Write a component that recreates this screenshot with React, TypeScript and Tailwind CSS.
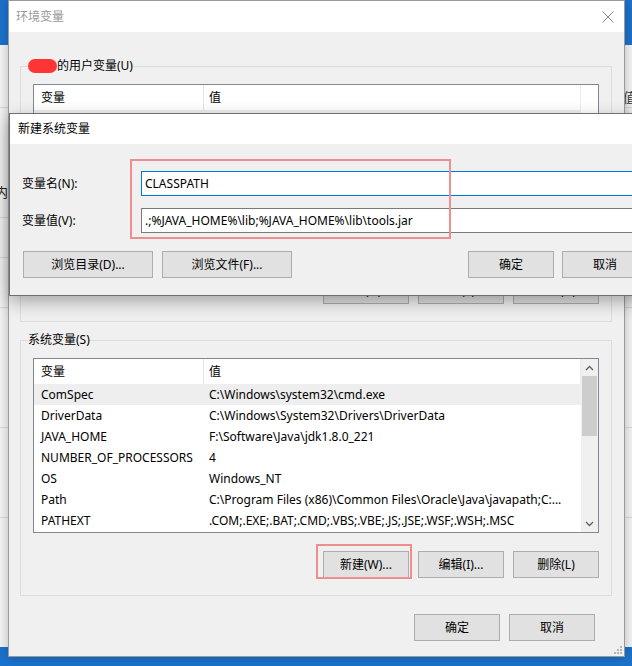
import React from 'react';

type Row = [string, string];

const SYS_ROWS: Row[] = [
  ['ComSpec', 'C:\\Windows\\system32\\cmd.exe'],
  ['DriverData', 'C:\\Windows\\System32\\Drivers\\DriverData'],
  ['JAVA_HOME', 'F:\\Software\\Java\\jdk1.8.0_221'],
  ['NUMBER_OF_PROCESSORS', '4'],
  ['OS', 'Windows_NT'],
  ['Path', 'C:\\Program Files (x86)\\Common Files\\Oracle\\Java\\javapath;C:...'],
  ['PATHEXT', '.COM;.EXE;.BAT;.CMD;.VBS;.VBE;.JS;.JSE;.WSF;.WSH;.MSC'],
];

const USER_ROWS: Row[] = [
  ['OneDrive', 'C:\\Users\\Administrator\\OneDrive'],
  ['Path', 'C:\\Users\\Administrator\\AppData\\Local\\Microsoft\\WindowsApps;'],
  ['TEMP', 'C:\\Users\\Administrator\\AppData\\Local\\Temp'],
  ['TMP', 'C:\\Users\\Administrator\\AppData\\Local\\Temp'],
];

const WinButton: React.FC<{ children: React.ReactNode; className?: string }> = ({ children, className }) => (
  <button
    type="button"
    className={'h-[27px] border border-[#adadad] bg-[#e1e1e1] text-[12px] text-black flex items-center justify-center ' + (className || '')}
  >
    {children}
  </button>
);

const Chevron: React.FC<{ down?: boolean }> = ({ down }) => (
  <svg width="9" height="6" viewBox="0 0 9 6">
    <path d={down ? 'M1 1 L4.5 4.5 L8 1' : 'M1 5 L4.5 1.5 L8 5'} fill="none" stroke="#606060" strokeWidth="1.3" />
  </svg>
);

const VarList: React.FC<{ rows: Row[]; scroll?: boolean }> = ({ rows, scroll }) => (
  <div className="h-[175px] border border-[#828790] bg-white flex overflow-hidden">
    <div className="flex-1 min-w-0 flex flex-col">
      <div className="h-[25px] flex items-center shrink-0 border-r border-[#ececec]">
        <div className="w-[170px] h-full pl-[7px] flex items-center border-r border-[#e5e5e5]">变量</div>
        <div className="pl-[5px]">值</div>
      </div>
      {rows.map(([name, value], i) => (
        <div key={name} className={'h-[21px] shrink-0 flex items-center whitespace-nowrap ' + (i === 0 ? 'bg-[#eeeeee]' : '')}>
          <div className="w-[170px] pl-[7px] overflow-hidden">{name}</div>
          <div className="pl-[5px] flex-1 min-w-0 overflow-hidden">{value}</div>
        </div>
      ))}
    </div>
    {scroll ? (
      <div className="w-[17px] bg-[#f0f0f0] flex flex-col">
        <div className="h-[17px] flex items-center justify-center"><Chevron /></div>
        <div className="mx-[1px] h-[60px] bg-[#cdcdcd]" />
        <div className="flex-1" />
        <div className="h-[17px] flex items-center justify-center"><Chevron down /></div>
      </div>
    ) : (
      <div className="w-[17px] bg-white" />
    )}
  </div>
);

const VarGroup: React.FC<{ legend: React.ReactNode; rows: Row[]; buttons: string[]; scroll?: boolean }> = ({ legend, rows, buttons, scroll }) => (
  <fieldset className="ml-[11px] w-[592px] border border-[#dcdcdc]">
    <legend className="ml-[7px] h-[16px] leading-[16px] flex items-center">{legend}</legend>
    <div className="pl-[12px] pr-[12px] pt-[10px] pb-[17px]">
      <VarList rows={rows} scroll={scroll} />
      <div className="mt-[18px] flex justify-end gap-[9px]">
        {buttons.map((b) => (
          <WinButton key={b} className="w-[86px]">{b}</WinButton>
        ))}
      </div>
    </div>
  </fieldset>
);

export default function App() {
  return (
    <div className="relative w-[632px] h-[666px] overflow-hidden bg-[#1b72cc] font-['Noto_Sans','Noto_Sans_CJK_SC',sans-serif] text-[12px] text-black">
      {/* window behind */}
      <div className="absolute left-0 top-[45px] w-[632px] h-[602px] bg-[#f3f3f3] flex flex-col">
        <div className="h-[63px] border-b border-[#d9d9d9] flex items-end justify-end">
          <span className="mr-[-4px] mb-[0px] text-[13px] text-[#333]">值</span>
        </div>
        <div className="h-[60px]" />
        <div className="h-[50px] border-b border-[#d9d9d9] flex items-center">
          <span className="ml-[-5px] text-[13px] text-[#222]">内</span>
        </div>
        <div className="h-[40px] border-b border-[#d9d9d9]" />
        <div className="h-[50px] border-b border-[#d9d9d9]" />
        <div className="h-[120px] border-b border-[#d9d9d9]" />
        <div className="h-[90px] border-b border-[#d9d9d9]" />
      </div>

      {/* 环境变量 window */}
      <div className="absolute left-[8px] top-0 w-[617px] h-[657px] bg-[#f0f0f0] border border-[#9a9a9a] shadow-[0_0_10px_rgba(0,0,0,0.25)] flex flex-col">
        <div className="h-[31px] bg-white flex items-center justify-between pl-[7px] pr-[10px] shrink-0">
          <span className="text-[#999]">环境变量</span>
          <svg width="12" height="12" viewBox="0 0 12 12">
            <path d="M0.5 0.5 L11.5 11.5 M11.5 0.5 L0.5 11.5" stroke="#8a8a8a" strokeWidth="1" />
          </svg>
        </div>

        <div className="mt-[26px]">
          <VarGroup
            legend={
              <>
                <span className="inline-block w-[29px] h-[14px] rounded-full bg-[#ff3535] blur-[0.6px]" />
                <span>的用户变量(U)</span>
              </>
            }
            rows={USER_ROWS}
            buttons={['新建(N)...', '编辑(E)...', '删除(D)']}
          />
        </div>

        <div className="mt-[10px]">
          <VarGroup legend={<span>系统变量(S)</span>} rows={SYS_ROWS} buttons={['新建(W)...', '编辑(I)...', '删除(L)']} scroll />
        </div>

        <div className="mt-[18px] flex justify-end gap-[9px] pr-[29px]">
          <WinButton className="w-[86px]">确定</WinButton>
          <WinButton className="w-[86px]">取消</WinButton>
        </div>

        <div className="flex-1 flex items-end justify-end pr-[2px] pb-[2px]">
          <svg width="8" height="8" viewBox="0 0 8 8">
            <rect x="6" y="0" width="2" height="2" fill="#b5b5b5" />
            <rect x="3" y="3" width="2" height="2" fill="#b5b5b5" />
            <rect x="6" y="3" width="2" height="2" fill="#b5b5b5" />
            <rect x="0" y="6" width="2" height="2" fill="#b5b5b5" />
            <rect x="3" y="6" width="2" height="2" fill="#b5b5b5" />
            <rect x="6" y="6" width="2" height="2" fill="#b5b5b5" />
          </svg>
        </div>
      </div>

      {/* 新建系统变量 dialog */}
      <div className="absolute left-[9px] top-[113px] w-[660px] h-[183px] bg-[#f0f0f0] border border-[#707070] shadow-[0_6px_16px_rgba(0,0,0,0.3)] flex flex-col">
        <div className="h-[30px] bg-white flex items-center pl-[8px] shrink-0">新建系统变量</div>
        <div className="mt-[27px] flex items-center">
          <div className="w-[131px] pl-[12px]">变量名(N):</div>
          <div className="flex-1 h-[25px] bg-white border border-[#0078d7] flex items-center pl-[3px]">CLASSPATH</div>
        </div>
        <div className="mt-[12px] flex items-center">
          <div className="w-[131px] pl-[12px]">变量值(V):</div>
          <div className="flex-1 h-[25px] bg-white border border-[#7a7a7a] flex items-center pl-[3px] whitespace-nowrap">
            {'.;%JAVA_HOME%\\lib;%JAVA_HOME%\\lib\\tools.jar'}
          </div>
        </div>
        <div className="mt-[18px] flex items-center pl-[13px]">
          <WinButton className="w-[130px]">浏览目录(D)...</WinButton>
          <WinButton className="w-[130px] ml-[9px]">浏览文件(F)...</WinButton>
          <WinButton className="w-[86px] ml-[176px]">确定</WinButton>
          <WinButton className="w-[86px] ml-[8px]">取消</WinButton>
        </div>
      </div>

      {/* annotation boxes */}
      <div className="absolute left-[130px] top-[159px] w-[321px] h-[80px] border-2 border-[#ef8e8e]" />
      <div className="absolute left-[316px] top-[544px] w-[96px] h-[35px] border-2 border-[#ef8e8e]" />
    </div>
  );
}
